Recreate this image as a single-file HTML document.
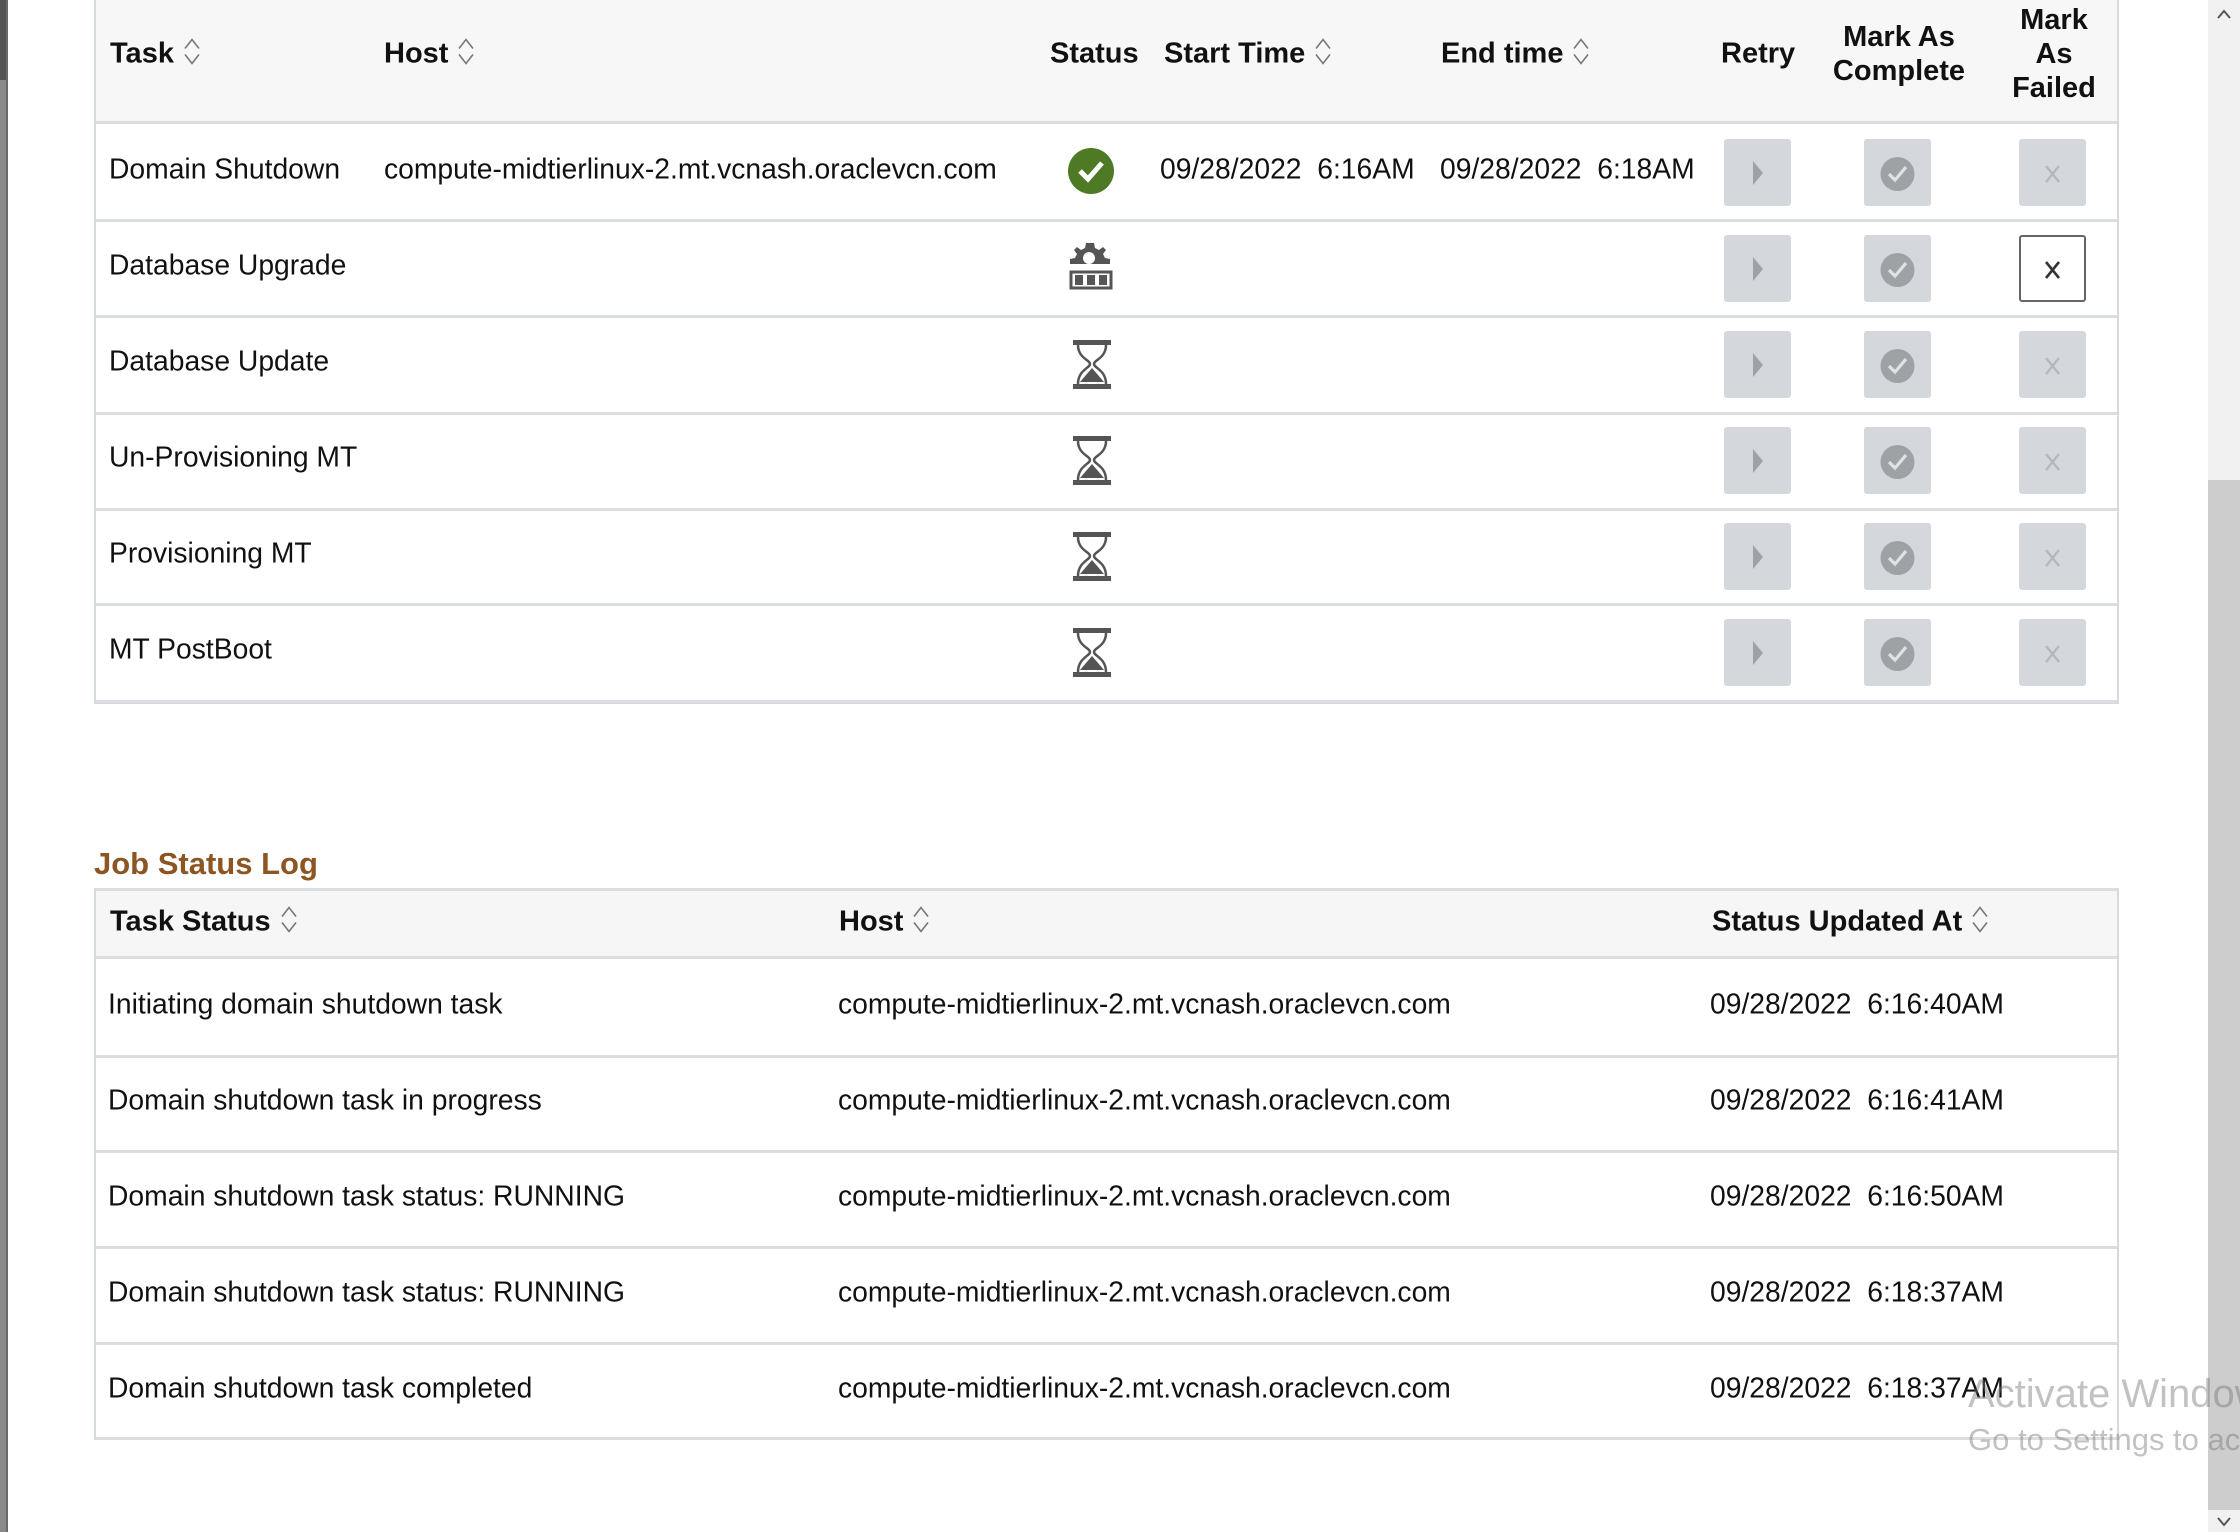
<!DOCTYPE html>
<html><head><meta charset="utf-8"><style>
*{margin:0;padding:0;box-sizing:border-box}
body{width:2240px;height:1532px;position:relative;background:#fff;font-family:"Liberation Sans",Arial,sans-serif;color:#111;overflow:hidden}
.a{position:absolute}
.t{position:absolute;font-size:29px;white-space:nowrap;transform:translateY(-50%)}
.t.n{transform:translateY(-50%) scaleX(0.975);transform-origin:left center}
.b{font-weight:bold}
.hl{position:absolute;height:3px;background:#dadee3}
.btn{position:absolute;width:67px;height:67px;background:#d4d7db;border-radius:3px}
.sort{display:inline-block;vertical-align:middle;margin-left:9px;margin-top:-6px}
</style></head><body>
<div class="a" style="left:0;top:0;width:6px;height:1532px;background:#8a8a8a"></div>
<div class="a" style="left:0;top:0;width:6px;height:80px;background:#555"></div>
<div class="a" style="left:6px;top:0;width:2px;height:1532px;background:#6a6a6a"></div>

<!-- table 1 -->
<div class="a" style="left:94px;top:0;width:2025px;height:704px;border:2px solid #d6dadf;border-top:none;background:#fff"></div>
<div class="a" style="left:96px;top:0;width:2021px;height:123px;background:#f7f7f7"></div>
<div class="hl" style="left:96px;width:2021px;top:121px"></div>
<div class="hl" style="left:96px;width:2021px;top:219px"></div>
<div class="hl" style="left:96px;width:2021px;top:315px"></div>
<div class="hl" style="left:96px;width:2021px;top:412px"></div>
<div class="hl" style="left:96px;width:2021px;top:508px"></div>
<div class="hl" style="left:96px;width:2021px;top:603px"></div>
<div class="hl" style="left:96px;width:2021px;top:700px"></div>

<svg width="0" height="0" style="position:absolute"><defs><symbol id="srt" viewBox="0 0 18 30"><path d="M2 12 L9 3 L16 12 M2 18 L9 27 L16 18" fill="none" stroke="#777" stroke-width="1.6"/></symbol></defs></svg>

<div class="t b" style="left:110px;top:54px">Task<svg class="sort" width="18" height="30"><use href="#srt"/></svg></div>
<div class="t b" style="left:384px;top:54px">Host<svg class="sort" width="18" height="30"><use href="#srt"/></svg></div>
<div class="t b" style="left:1050px;top:54px">Status</div>
<div class="t b" style="left:1164px;top:54px">Start Time<svg class="sort" width="18" height="30"><use href="#srt"/></svg></div>
<div class="t b" style="left:1441px;top:54px">End time<svg class="sort" width="18" height="30"><use href="#srt"/></svg></div>
<div class="t b" style="left:1721px;top:54px">Retry</div>
<div class="t b" style="left:1899px;top:54px;transform:translate(-50%,-50%);text-align:center;line-height:34px">Mark As<br>Complete</div>
<div class="t b" style="left:2054px;top:54px;transform:translate(-50%,-50%);text-align:center;line-height:34px">Mark<br>As<br>Failed</div>

<div class="t n" style="left:109px;top:170px">Domain Shutdown</div>
<div class="t n" style="left:384px;top:170px">compute-midtierlinux-2.mt.vcnash.oraclevcn.com</div>
<div class="t n" style="left:1160px;top:170px">09/28/2022&nbsp; 6:16AM</div>
<div class="t n" style="left:1440px;top:170px">09/28/2022&nbsp; 6:18AM</div>
<div class="t n" style="left:109px;top:266px">Database Upgrade</div>
<div class="t n" style="left:109px;top:362px">Database Update</div>
<div class="t n" style="left:109px;top:458px">Un-Provisioning MT</div>
<div class="t n" style="left:109px;top:554px">Provisioning MT</div>
<div class="t n" style="left:109px;top:650px">MT PostBoot</div>

<!-- status icons -->
<svg class="a" style="left:1067px;top:147px" width="48" height="48" viewBox="0 0 48 48"><circle cx="24" cy="24" r="23" fill="#4e7a26"/><path d="M13 24 L21 32 L35 16" fill="none" stroke="#fff" stroke-width="5"/></svg>
<svg class="a" style="left:1066px;top:240px" width="50" height="52" viewBox="0 0 50 52"><path d="M25 3 l3 0 1 5 4 2 4-3 3 3-3 4 2 4 5 1 0 5-20 0 a6 6 0 1 0 -2 0 l-18 0 0-5 5-1 2-4-3-4 3-3 4 3 4-2 1-5z" fill="#555"/><rect x="5" y="32" width="40" height="16" fill="none" stroke="#555" stroke-width="3"/><rect x="9" y="35" width="8" height="10" fill="#555"/><rect x="21" y="35" width="8" height="10" fill="#555"/><rect x="33" y="35" width="8" height="10" fill="#555"/></svg>
<svg width="0" height="0" style="position:absolute"><defs><symbol id="hg" viewBox="0 0 42 52"><rect x="2" y="2" width="38" height="5" fill="#555"/><rect x="2" y="46" width="38" height="5" fill="#555"/><path d="M7 7 C7 20 19 22 19 26 C19 30 7 32 7 46 M35 7 C35 20 23 22 23 26 C23 30 35 32 35 46" fill="none" stroke="#555" stroke-width="2.5"/><path d="M21 30 L33 44 L9 44z" fill="#555"/></symbol></defs></svg>
<svg class="a" style="left:1071px;top:338px" width="42" height="52"><use href="#hg"/></svg>
<svg class="a" style="left:1071px;top:434px" width="42" height="52"><use href="#hg"/></svg>
<svg class="a" style="left:1071px;top:530px" width="42" height="52"><use href="#hg"/></svg>
<svg class="a" style="left:1071px;top:626px" width="42" height="52"><use href="#hg"/></svg>

<!-- buttons -->
<svg width="0" height="0" style="position:absolute"><defs>
<symbol id="pl" viewBox="0 0 67 67"><path d="M29 22 L39 34 L29 46z" fill="#9da2a7"/></symbol>
<symbol id="ck" viewBox="0 0 67 67"><circle cx="33.5" cy="35" r="17" fill="#9ea2a6"/><path d="M25 35 L31 41 L42 28" fill="none" stroke="#dfe1e3" stroke-width="3.2"/></symbol>
<symbol id="xx" viewBox="0 0 67 67"><path d="M27 27 L40 43 M40 27 L27 43" stroke="#b5b9bd" stroke-width="2.4"/></symbol>
</defs></svg>
<div class="btn" style="left:1724px;top:139px"><svg width="67" height="67"><use href="#pl"/></svg></div>
<div class="btn" style="left:1864px;top:139px"><svg width="67" height="67"><use href="#ck"/></svg></div>
<div class="btn" style="left:2019px;top:139px"><svg width="67" height="67"><use href="#xx"/></svg></div>
<div class="btn" style="left:1724px;top:235px"><svg width="67" height="67"><use href="#pl"/></svg></div>
<div class="btn" style="left:1864px;top:235px"><svg width="67" height="67"><use href="#ck"/></svg></div>
<div class="btn" style="left:2019px;top:235px;background:#fff;border:2px solid #666"><svg width="63" height="63" viewBox="2 2 63 63"><path d="M27 27 L40 43 M40 27 L27 43" stroke="#333" stroke-width="2.6"/></svg></div>
<div class="btn" style="left:1724px;top:331px"><svg width="67" height="67"><use href="#pl"/></svg></div>
<div class="btn" style="left:1864px;top:331px"><svg width="67" height="67"><use href="#ck"/></svg></div>
<div class="btn" style="left:2019px;top:331px"><svg width="67" height="67"><use href="#xx"/></svg></div>
<div class="btn" style="left:1724px;top:427px"><svg width="67" height="67"><use href="#pl"/></svg></div>
<div class="btn" style="left:1864px;top:427px"><svg width="67" height="67"><use href="#ck"/></svg></div>
<div class="btn" style="left:2019px;top:427px"><svg width="67" height="67"><use href="#xx"/></svg></div>
<div class="btn" style="left:1724px;top:523px"><svg width="67" height="67"><use href="#pl"/></svg></div>
<div class="btn" style="left:1864px;top:523px"><svg width="67" height="67"><use href="#ck"/></svg></div>
<div class="btn" style="left:2019px;top:523px"><svg width="67" height="67"><use href="#xx"/></svg></div>
<div class="btn" style="left:1724px;top:619px"><svg width="67" height="67"><use href="#pl"/></svg></div>
<div class="btn" style="left:1864px;top:619px"><svg width="67" height="67"><use href="#ck"/></svg></div>
<div class="btn" style="left:2019px;top:619px"><svg width="67" height="67"><use href="#xx"/></svg></div>

<!-- Job status log -->
<div class="t b" style="left:94px;top:864px;color:#8d5522;font-size:31px">Job Status Log</div>
<div class="a" style="left:94px;top:888px;width:2025px;height:552px;border:2px solid #d6dadf;border-top:3px solid #dadee3"></div>
<div class="a" style="left:96px;top:891px;width:2021px;height:66px;background:#f6f6f6"></div>
<div class="hl" style="left:96px;width:2021px;top:956px"></div>
<div class="hl" style="left:96px;width:2021px;top:1055px"></div>
<div class="hl" style="left:96px;width:2021px;top:1150px"></div>
<div class="hl" style="left:96px;width:2021px;top:1246px"></div>
<div class="hl" style="left:96px;width:2021px;top:1342px"></div>
<div class="hl" style="left:96px;width:2021px;top:1437px"></div>

<div class="t b" style="left:110px;top:922px">Task Status<svg class="sort" width="18" height="30"><use href="#srt"/></svg></div>
<div class="t b" style="left:839px;top:922px">Host<svg class="sort" width="18" height="30"><use href="#srt"/></svg></div>
<div class="t b" style="left:1712px;top:922px">Status Updated At<svg class="sort" width="18" height="30"><use href="#srt"/></svg></div>

<div class="t n" style="left:108px;top:1005px">Initiating domain shutdown task</div>
<div class="t n" style="left:838px;top:1005px">compute-midtierlinux-2.mt.vcnash.oraclevcn.com</div>
<div class="t n" style="left:1710px;top:1005px">09/28/2022&nbsp; 6:16:40AM</div>
<div class="t n" style="left:108px;top:1101px">Domain shutdown task in progress</div>
<div class="t n" style="left:838px;top:1101px">compute-midtierlinux-2.mt.vcnash.oraclevcn.com</div>
<div class="t n" style="left:1710px;top:1101px">09/28/2022&nbsp; 6:16:41AM</div>
<div class="t n" style="left:108px;top:1197px">Domain shutdown task status: RUNNING</div>
<div class="t n" style="left:838px;top:1197px">compute-midtierlinux-2.mt.vcnash.oraclevcn.com</div>
<div class="t n" style="left:1710px;top:1197px">09/28/2022&nbsp; 6:16:50AM</div>
<div class="t n" style="left:108px;top:1293px">Domain shutdown task status: RUNNING</div>
<div class="t n" style="left:838px;top:1293px">compute-midtierlinux-2.mt.vcnash.oraclevcn.com</div>
<div class="t n" style="left:1710px;top:1293px">09/28/2022&nbsp; 6:18:37AM</div>
<div class="t n" style="left:108px;top:1389px">Domain shutdown task completed</div>
<div class="t n" style="left:838px;top:1389px">compute-midtierlinux-2.mt.vcnash.oraclevcn.com</div>
<div class="t n" style="left:1710px;top:1389px">09/28/2022&nbsp; 6:18:37AM</div>

<!-- scrollbar -->
<div class="a" style="left:2208px;top:0;width:32px;height:1532px;background:#f0f0f0"></div>
<div class="a" style="left:2208px;top:480px;width:32px;height:1030px;background:#cdcdcd"></div>
<svg class="a" style="left:2214px;top:6px" width="20" height="16"><path d="M4 12 L10 5 L16 12" fill="none" stroke="#555" stroke-width="2"/></svg>
<svg class="a" style="left:2214px;top:1514px" width="20" height="16"><path d="M4 4 L10 11 L16 4" fill="none" stroke="#555" stroke-width="2"/></svg>

<!-- watermark -->
<div class="a" style="left:1968px;top:1372px;font-size:40px;color:rgba(120,120,120,0.45);white-space:nowrap">Activate Windows</div>
<div class="a" style="left:1968px;top:1422px;font-size:31px;color:rgba(120,120,120,0.45);white-space:nowrap">Go to Settings to activate Windows.</div>
</body></html>
